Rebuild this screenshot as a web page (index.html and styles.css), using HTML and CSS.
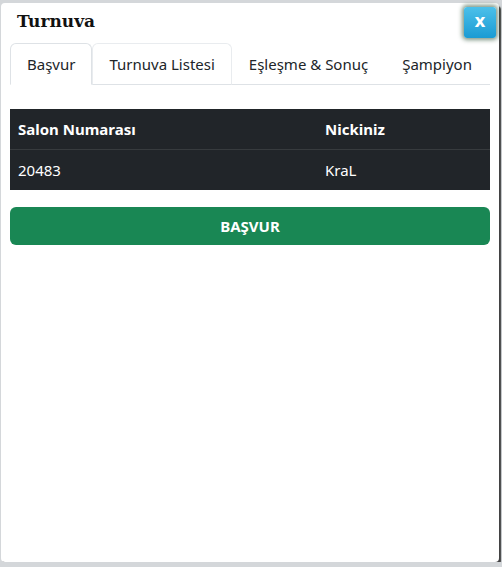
FILE: index.html
```html
<!DOCTYPE html>
<html lang="tr">
<head>
    <meta charset="utf-8" />
    <title>Turnuva</title>
    <link rel="stylesheet" href="styles.css">
</head>
<body>
    <div id="turnuvaDialog" class="dialog">
        <div class="dialogHeader">
            <h2 class="dialogTitle">Turnuva</h2>
            <button type="button" class="closeButton">x</button>
        </div>

        <ul class="navTabs">
            <li><a class="tabLink active" href="#">Başvur</a></li>
            <li><a class="tabLink hover" href="#">Turnuva Listesi</a></li>
            <li><a class="tabLink" href="#">Eşleşme &amp; Sonuç</a></li>
            <li><a class="tabLink" href="#">Şampiyon</a></li>
        </ul>

        <div class="tabContent">
            <table class="darkTable">
                <thead>
                    <tr>
                        <th>Salon Numarası</th>
                        <th>Nickiniz</th>
                    </tr>
                </thead>
                <tbody>
                    <tr>
                        <td>20483</td>
                        <td>KraL</td>
                    </tr>
                </tbody>
            </table>

            <button type="button" class="applyButton">BAŞVUR</button>
        </div>
    </div>
</body>
</html>
```

FILE: styles.css
```css
body {
    background-color: #d4d7da;
    margin: 0px;
    padding: 0px;
    font-family: "Noto Sans", "Open Sans", sans-serif;
    font-size: 15px;
    color: #212529;
}

.dialog {
    position: relative;
    box-sizing: border-box;
    width: 498px;
    height: 559px;
    margin: 3px 0px 0px 1px;
    padding: 0px 9px;
    background-color: #fff;
    border-radius: 4px;
    box-shadow: 2px 3px 1px rgba(40, 40, 40, 0.85);
}

.dialogHeader {
    height: 40px;
}

.dialogTitle {
    margin: 0px;
    padding: 7px 0px 0px 7px;
    font-family: "DejaVu Serif", "Liberation Serif", serif;
    font-size: 17px;
    font-weight: bold;
    line-height: 22px;
    color: #111;
}

.closeButton {
    position: absolute;
    top: 4px;
    right: 3px;
    width: 32px;
    height: 31px;
    border: none;
    border-radius: 3px;
    background: linear-gradient(#4cc0ea, #1a9bd3);
    box-shadow: 0px 0px 4px 2px rgba(40, 80, 50, 0.6);
    color: #fff;
    font-family: "DejaVu Sans", sans-serif;
    font-size: 17px;
    font-weight: bold;
    padding: 0px 0px 3px 0px;
}

.navTabs {
    display: flex;
    list-style: none;
    margin: 0px;
    padding: 0px;
    border-bottom: 1px solid #dee2e6;
    white-space: nowrap;
}

.tabLink {
    display: block;
    margin-bottom: -1px;
    padding: 8px 16px;
    line-height: 24px;
    border: 1px solid transparent;
    border-top-left-radius: 6px;
    border-top-right-radius: 6px;
    color: #212529;
    text-decoration: none;
}

    .tabLink.hover {
        border-color: #e9ecef #e9ecef #dee2e6;
    }

    .tabLink.active {
        background-color: #fff;
        border-color: #dee2e6 #dee2e6 #fff;
    }

.tabContent {
    padding-top: 24px;
}

.darkTable {
    width: 100%;
    border-collapse: collapse;
    background-color: #212529;
    color: #fff;
    margin-bottom: 17px;
}

    .darkTable th,
    .darkTable td {
        padding: 8px;
        line-height: 24px;
        text-align: left;
    }

    .darkTable th {
        font-weight: bold;
        border-bottom: 1px solid #373b3e;
    }

    .darkTable th:first-child {
        width: 291px;
    }

.applyButton {
    display: block;
    width: 100%;
    height: 38px;
    border: none;
    border-radius: 6px;
    background-color: #198754;
    color: #fff;
    font-family: "Noto Sans", "Open Sans", sans-serif;
    font-size: 15px;
    font-weight: bold;
}
```
